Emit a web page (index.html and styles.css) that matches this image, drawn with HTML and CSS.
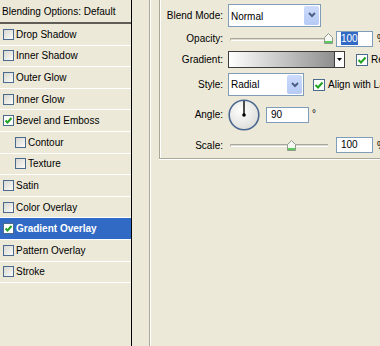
FILE: index.html
```html
<!DOCTYPE html>
<html>
<head>
    <title>Layer Style - Gradient Overlay</title>
    <link rel="stylesheet" href="styles.css">
</head>
<body>
    <div id="dialog">
        <div id="styles-list">
            <div class="list-header">Blending Options: Default</div>
            <div class="list-row"><span class="check"></span>Drop Shadow</div>
            <div class="list-row"><span class="check"></span>Inner Shadow</div>
            <div class="list-row"><span class="check"></span>Outer Glow</div>
            <div class="list-row"><span class="check"></span>Inner Glow</div>
            <div class="list-row"><span class="check checked"><svg width="9" height="9" viewBox="0 0 9 9"><polyline points="1.5,4.5 3.5,6.5 7.5,2" fill="none" stroke="#21a121" stroke-width="2"/></svg></span>Bevel and Emboss</div>
            <div class="list-row sub"><span class="check"></span>Contour</div>
            <div class="list-row sub"><span class="check"></span>Texture</div>
            <div class="list-row"><span class="check"></span>Satin</div>
            <div class="list-row"><span class="check"></span>Color Overlay</div>
            <div class="list-row selected"><span class="check checked"><svg width="9" height="9" viewBox="0 0 9 9"><polyline points="1.5,4.5 3.5,6.5 7.5,2" fill="none" stroke="#21a121" stroke-width="2"/></svg></span>Gradient Overlay</div>
            <div class="list-row"><span class="check"></span>Pattern Overlay</div>
            <div class="list-row"><span class="check"></span>Stroke</div>
        </div>

        <div class="divider"></div>

        <div id="settings">
            <div class="group-box">
                <div class="field row-blend">
                    <label>Blend Mode:</label>
                    <div class="combo combo-blend">
                        <span class="combo-value">Normal</span>
                        <span class="combo-btn"><svg width="8" height="6" viewBox="0 0 8 6"><polyline points="1,1 4,4 7,1" fill="none" stroke="#4d6185" stroke-width="2"/></svg></span>
                    </div>
                </div>

                <div class="field row-opacity">
                    <label>Opacity:</label>
                    <div class="slider">
                        <div class="track"></div>
                        <svg class="thumb" style="left: 94px" width="9" height="11" viewBox="0 0 9 11"><path d="M0.5 4.5 L4.5 0.5 L8.5 4.5 V10.5 H0.5 Z" fill="#f6f6f2" stroke="#8f9b8c"/><rect x="1" y="8" width="7" height="2" fill="#5cc95c"/></svg>
                    </div>
                    <div class="num"><span class="sel">100</span></div>
                    <span class="unit">%</span>
                </div>

                <div class="field row-gradient">
                    <label>Gradient:</label>
                    <div class="gradient-pick">
                        <div class="grad"></div>
                        <div class="grad-arrow"><svg width="5" height="3" viewBox="0 0 5 3"><path d="M0 0 H5 L2.5 3 Z" fill="#000"/></svg></div>
                    </div>
                    <span class="check check-lg checked gap-reverse"><svg width="10" height="10" viewBox="0 0 10 10"><polyline points="1.5,5 4,7.5 8.5,2.5" fill="none" stroke="#21a121" stroke-width="2"/></svg></span>
                    <span class="check-label">Reverse</span>
                </div>

                <div class="field row-style">
                    <label>Style:</label>
                    <div class="combo combo-style">
                        <span class="combo-value">Radial</span>
                        <span class="combo-btn"><svg width="8" height="6" viewBox="0 0 8 6"><polyline points="1,1 4,4 7,1" fill="none" stroke="#4d6185" stroke-width="2"/></svg></span>
                    </div>
                    <span class="check check-lg checked gap-align"><svg width="10" height="10" viewBox="0 0 10 10"><polyline points="1.5,5 4,7.5 8.5,2.5" fill="none" stroke="#21a121" stroke-width="2"/></svg></span>
                    <span class="check-label">Align with Layer</span>
                </div>

                <div class="field row-angle">
                    <label>Angle:</label>
                    <svg class="dial" width="32" height="32" viewBox="0 0 32 32">
                        <defs>
                            <radialGradient id="dial-fill" cx="0.4" cy="0.35" r="0.7">
                                <stop offset="0" stop-color="#ffffff"/>
                                <stop offset="1" stop-color="#dcdcd8"/>
                            </radialGradient>
                        </defs>
                        <circle cx="16" cy="16" r="14.8" fill="url(#dial-fill)" stroke="#4a6791" stroke-width="1.6"/>
                        <line x1="16" y1="16" x2="16" y2="2" stroke="#000" stroke-width="1.4"/>
                        <circle cx="16" cy="16" r="1.8" fill="#000"/>
                    </svg>
                    <div class="num num-angle">90</div>
                    <span class="degree">°</span>
                </div>

                <div class="field row-scale">
                    <label>Scale:</label>
                    <div class="slider">
                        <div class="track"></div>
                        <svg class="thumb" style="left: 57px" width="9" height="11" viewBox="0 0 9 11"><path d="M0.5 4.5 L4.5 0.5 L8.5 4.5 V10.5 H0.5 Z" fill="#f6f6f2" stroke="#8f9b8c"/><rect x="1" y="8" width="7" height="2" fill="#5cc95c"/></svg>
                    </div>
                    <div class="num">100</div>
                    <span class="unit">%</span>
                </div>
            </div>
        </div>
    </div>
</body>
</html>
```

FILE: styles.css
```css
body {
    margin: 0;
    background-color: #ece9d8;
    font-family: "Liberation Sans", Arial, sans-serif;
    font-size: 10px;
    color: #000;
    overflow: hidden;
}

#dialog {
    display: flex;
    height: 346px;
}

/* Styles list on the left */
#styles-list {
    width: 131px;
    flex-shrink: 0;
    border-right: 1px solid #000;
}

.list-header {
    height: 22px;
    line-height: 24px;
    padding-left: 2px;
    border-bottom: 2px solid #5f5d55;
    white-space: nowrap;
}

.list-row {
    height: 20.6px;
    border-bottom: 1px solid #fff;
    display: flex;
    align-items: center;
    padding-left: 3px;
    white-space: nowrap;
}

.list-row.sub {
    padding-left: 15px;
}

.list-row.selected {
    background-color: #316ac5;
    color: #fff;
    font-weight: bold;
}

.check {
    width: 9px;
    height: 9px;
    flex-shrink: 0;
    border: 1px solid #4a6a8e;
    background: linear-gradient(135deg, #d8d7d0, #fbfbf9);
    margin-right: 2px;
    display: flex;
}

.check.checked {
    background: #fff;
}

.check-lg {
    width: 10px;
    height: 10px;
}

/* Etched separators */
.divider {
    flex-shrink: 0;
    width: 0;
    margin-left: 17px;
    border-left: 1px solid #aca899;
    border-right: 1px solid #fff;
}

#settings {
    flex: 1;
    min-width: 0;
    margin-left: 8px;
    overflow: hidden;
}

.group-box {
    height: 158px;
    border-left: 1px solid #aca899;
    border-bottom: 1px solid #aca899;
    box-shadow: inset 1px 0 0 #fff, 0 1px 0 #fff;
}

/* Form rows */
.field {
    display: flex;
    align-items: center;
    white-space: nowrap;
}

.field > * {
    flex-shrink: 0;
}

.field label {
    width: 63px;
    margin-right: 5px;
    text-align: right;
}

.row-blend { height: 30px; }
.row-opacity { height: 17px; }
.row-gradient { height: 25px; }
.row-style { height: 25px; }
.row-angle { height: 35px; }
.row-scale { height: 26px; }

.combo {
    height: 21px;
    border: 1px solid #7f9db9;
    background-color: #fff;
    display: flex;
    align-items: center;
}

.combo-blend { width: 91px; }
.combo-style { width: 74px; }

.combo-value {
    flex: 1;
    padding-left: 2px;
}

.row-blend .combo-value {
    padding-top: 3px;
}

.combo-btn {
    width: 15px;
    height: 19px;
    margin-right: 1px;
    border-radius: 2px;
    background: linear-gradient(#cddbfc, #b6caf5);
    display: flex;
    align-items: center;
    justify-content: center;
}

.slider {
    position: relative;
    width: 102px;
    height: 11px;
    margin-left: 2px;
    margin-right: 4px;
    display: flex;
    align-items: center;
}

.track {
    width: 97px;
    height: 1px;
    margin-top: 1px;
    border-top: 1px solid #a7a59c;
    border-bottom: 1px solid #fff;
    border-left: 1px solid #a7a59c;
    border-radius: 2px 0 0 2px;
    background-color: #dedbd0;
}

.thumb {
    position: absolute;
    top: 0;
}

.num {
    width: 31px;
    height: 14px;
    line-height: 14px;
    padding-left: 4px;
    border: 1px solid #7f9db9;
    background-color: #fff;
}

.num-angle {
    width: 37px;
    margin-left: 6px;
}

.sel {
    background-color: #316ac5;
    color: #fff;
    padding: 1px 0;
}

.unit {
    margin-left: 4px;
}

.degree {
    margin-left: 3px;
    margin-top: -3px;
}

.gradient-pick {
    width: 115px;
    height: 15px;
    border: 1px solid #3c3c3c;
    display: flex;
}

.grad {
    flex: 1;
    background: linear-gradient(to right, #ffffff, #8e8e8e);
}

.grad-arrow {
    width: 9px;
    border-left: 1px solid #3c3c3c;
    background-color: #fdfdfd;
    display: flex;
    align-items: center;
    justify-content: center;
}

.gap-reverse { margin-left: 11px; }
.gap-align { margin-left: 9px; }

.check-label {
    margin-left: 1px;
}
```
